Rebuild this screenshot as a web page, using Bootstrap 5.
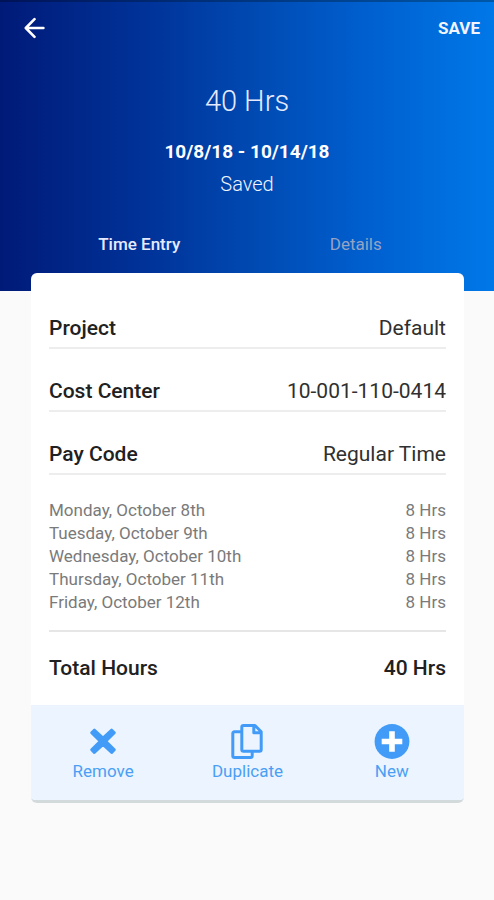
<!DOCTYPE html>
<html lang="en">
<head>
<meta charset="utf-8">
<meta name="viewport" content="width=device-width, initial-scale=1">
<title>Time Entry</title>
<link href="https://cdn.jsdelivr.net/npm/bootstrap@5.3.0/dist/css/bootstrap.min.css" rel="stylesheet">
<style>
  body { font-family: Roboto, "Liberation Sans", sans-serif; background: #fafafa; color: #212121; }
  .hero { background: linear-gradient(90deg, #001a78 0%, #003399 30%, #0048b0 50%, #0060d0 75%, #0078e8 100%); border-top: 2px solid; border-image: linear-gradient(90deg, #001258, #0058a8) 1; padding-bottom: 35px; }
  .topbar { height: 52px; padding: 0 14px 0 24px; }
  .topbar .btn { color: #f2f4ff; font-size: 17px; line-height: 24px; }
  .hero-hours { font-size: 29px; line-height: 36px; font-weight: 300; margin-top: 29px; color: #e6eaff; }
  .hero-dates { font-size: 19px; line-height: 24px; margin-top: 21px; }
  .hero-state { font-size: 20px; line-height: 24px; margin-top: 8px; font-weight: 300; color: #f2f4ff; }
  .tabs { margin-top: 36px; padding: 0 30px 0 31px; }
  .tabs .nav-link { font-size: 17px; line-height: 24px; font-weight: 400; color: #95a3c4; }
  .tabs .nav-link.active { font-weight: 500; color: #e6eaff; }
  .entry { margin: -18px 30px 0 31px; border-radius: 6px; border-bottom: 3px solid #d3dadc; }
  .entry-body { padding: 32px 18px 25px; }
  .field { font-size: 21px; line-height: 24px; padding: 11px 0 7px; margin-bottom: 19px; border-bottom: 2px solid #ededed; }
  .value { font-weight: 400; color: #303030; }
  .strong { font-weight: 500; }
  .days { font-size: 17px; line-height: 23px; color: #7a7a7a; margin: 24px 0 16px; }
  .days th { font-weight: 400; }
  .total { font-size: 21px; line-height: 24px; padding-top: 24px; border-top: 2px solid #e6e6e6; }
  .actions { background: #ebf4ff; border-radius: 0 0 4px 4px; padding: 18px 0 17px; }
  .actions .btn { color: #4a9ff5; font-size: 17px; line-height: 24px; }
</style>
</head>
<body>
<header class="hero text-white text-center">
  <div class="topbar d-flex align-items-center justify-content-between">
    <button type="button" class="btn p-0 border-0 d-flex" aria-label="Back">
      <svg width="21" height="22" viewBox="0 0 21 22" fill="none" stroke="#fff" stroke-width="2.6" stroke-linecap="round" stroke-linejoin="round" aria-hidden="true"><path d="M10.500 2.200L1.800 11l8.700 8.800M2 11h17.400"/></svg>
    </button>
    <button type="button" class="btn p-0 border-0 fw-bold">SAVE</button>
  </div>
  <h1 class="hero-hours mb-0">40 Hrs</h1>
  <p class="hero-dates fw-bold mb-0">10/8/18 - 10/14/18</p>
  <p class="hero-state mb-0">Saved</p>
  <nav class="tabs nav nav-fill row-cols-2">
    <a class="nav-link active p-0" aria-current="page" href="#entry">Time Entry</a>
    <a class="nav-link p-0" href="#details">Details</a>
  </nav>
</header>
<main id="entry" class="entry bg-white position-relative">
  <div class="entry-body">
    <dl class="mb-0">
      <div class="field d-flex justify-content-between"><dt class="strong">Project</dt><dd class="value mb-0">Default</dd></div>
      <div class="field d-flex justify-content-between"><dt class="strong">Cost Center</dt><dd class="value mb-0">10-001-110-0414</dd></div>
      <div class="field d-flex justify-content-between"><dt class="strong">Pay Code</dt><dd class="value mb-0">Regular Time</dd></div>
    </dl>
    <table class="days w-100">
      <tbody>
        <tr><th scope="row" class="p-0">Monday, October 8th</th><td class="p-0 text-end">8 Hrs</td></tr>
        <tr><th scope="row" class="p-0">Tuesday, October 9th</th><td class="p-0 text-end">8 Hrs</td></tr>
        <tr><th scope="row" class="p-0">Wednesday, October 10th</th><td class="p-0 text-end">8 Hrs</td></tr>
        <tr><th scope="row" class="p-0">Thursday, October 11th</th><td class="p-0 text-end">8 Hrs</td></tr>
        <tr><th scope="row" class="p-0">Friday, October 12th</th><td class="p-0 text-end">8 Hrs</td></tr>
      </tbody>
    </table>
    <div class="total strong d-flex justify-content-between"><span>Total Hours</span><span>40 Hrs</span></div>
  </div>
  <div class="actions row row-cols-3 g-0">
    <button type="button" class="btn col p-0 border-0 d-flex flex-column align-items-center">
      <svg width="36" height="36" viewBox="0 0 36 36" fill="#429cf7" stroke="#429cf7" stroke-width="3" stroke-linejoin="round" aria-hidden="true"><path d="M9.300 7.200L18 15.200 26.700 7.200 29.300 9.800 20.700 18.300 29.300 26.800 26.700 29.400 18 21.400 9.300 29.400 6.700 26.800 15.300 18.300 6.700 9.800z"/></svg>
      <span>Remove</span>
    </button>
    <button type="button" class="btn col p-0 border-0 d-flex flex-column align-items-center">
      <svg width="36" height="36" viewBox="0 0 36 36" fill="none" stroke="#429cf7" stroke-width="3" stroke-linejoin="round" aria-hidden="true"><path d="M12.500 8.800H5.500Q3.800 8.800 3.800 10.500V32.800Q3.800 34.500 5.500 34.500H21.500Q23.200 34.500 23.200 32.800V28.500M14.500 2.500H26L32.200 8.700V26.600Q32.200 28.300 30.500 28.300H14.500Q12.800 28.300 12.800 26.600V4.200Q12.800 2.500 14.500 2.500zM24.800 2.700V9.700H32"/></svg>
      <span>Duplicate</span>
    </button>
    <button type="button" class="btn col p-0 border-0 d-flex flex-column align-items-center">
      <svg width="36" height="36" viewBox="0 0 36 36" aria-hidden="true"><circle cx="18" cy="18.500" r="17.400" fill="#429cf7"/><path d="M18 8.200v20.600M7.700 18.500h20.600" stroke="#fff" stroke-width="5.600" fill="none"/></svg>
      <span>New</span>
    </button>
  </div>
</main>
<script src="https://cdn.jsdelivr.net/npm/bootstrap@5.3.0/dist/js/bootstrap.bundle.min.js"></script>
</body>
</html>
